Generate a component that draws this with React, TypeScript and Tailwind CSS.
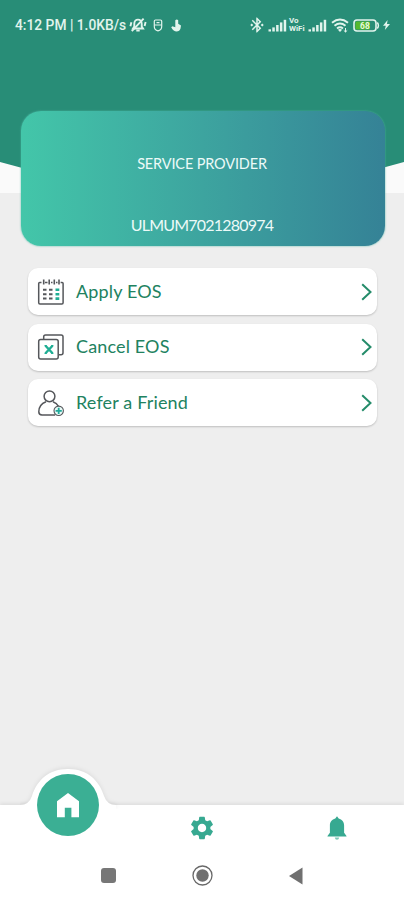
import type { ReactNode } from "react";
import { MdBluetoothConnected, MdSettings } from "react-icons/md";

function SignalIcon() {
    return (
        <svg width="19" height="13" viewBox="0 0 19 13" fill="currentColor">
            <rect x="0.5" y="10.3" width="2.5" height="2.2" />
            <rect x="4.3" y="8.4" width="2.5" height="4.1" />
            <rect x="8.1" y="6" width="2.5" height="6.5" />
            <rect x="11.9" y="3.4" width="2.5" height="9.1" />
            <rect x="15.7" y="0.8" width="2.5" height="11.7" />
        </svg>
    );
}

function MutedBellIcon() {
    return (
        <svg width="18" height="16" viewBox="0 0 18 16" fill="none" stroke="currentColor" strokeWidth="1.9">
            <path d="M4 11.5h10l-1.3-2V6.8C12.7 4.3 11 2.6 9 2.6S5.3 4.3 5.3 6.8v2.7z" />
            <path d="M7.3 13.5h3.4M2.8 14.2 14.6 1.6M1.4 9.2l1-4M16.6 5l-1 4" />
        </svg>
    );
}

function ShieldIcon() {
    return (
        <svg width="10" height="13" viewBox="0 0 10 13" fill="none" stroke="currentColor" strokeWidth="1.2">
            <path d="M2.5 1h5q1.2 0 1.2 1.2v5.4c0 2.4-1.4 3.9-3.7 4.3-2.3-.4-3.7-1.9-3.7-4.3V2.2Q1.3 1 2.5 1z" />
            <path d="M1.5 6h7M3.5 3.7h3" />
        </svg>
    );
}

function TouchIcon() {
    return (
        <svg width="11" height="13" viewBox="0 0 11 13" fill="currentColor">
            <path d="M4.3 1.3Q5.8-.2 7.2 1.3v3.5l2.8 1.6-.5 3.2Q8.7 12.6 5.5 12.6 2.6 12.5.2 8.2l1.2-.9 2.9.9z" />
        </svg>
    );
}

function WifiIcon() {
    return (
        <svg width="18" height="15" viewBox="0 0 18 15" fill="none" stroke="currentColor" strokeWidth="2">
            <path d="M1 4.7Q9-1.7 17 4.7M3.5 7.7q5.5-4.4 11 0M6 10.5q3-2.4 6 0" />
            <path d="m9 14-2.1-2.3q2.1-1.5 4.2 0z" fill="currentColor" stroke="none" />
            <path d="M14.5 10v4m-1.7-1.6L14.5 14l1.7-1.6" strokeWidth="1" />
        </svg>
    );
}

function Battery() {
    return (
        <svg width="27" height="13" viewBox="0 0 27 13">
            <rect x="1" y="1" width="22" height="11" rx="3" fill="none" stroke="#e2f4ed" strokeWidth="1.6" />
            <rect x="2.5" y="2.5" width="14.5" height="8" rx="1.3" fill="#55b82d" />
            <path d="M24.3 3.5q2.2 3 0 6" fill="none" stroke="#e2f4ed" strokeWidth="1.5" />
            <text x="12" y="9.6" textAnchor="middle" fontFamily="Roboto, sans-serif" fontSize="8.5" fontWeight="700" fill="#e5f6df">
                68
            </text>
        </svg>
    );
}

function StatusBar() {
    return (
        <div className="relative flex h-[50px] items-center justify-between pr-[14px] pl-[15px] text-[#e2f4ed]">
            <div className="flex items-center">
                <span className="w-[112px] font-[Roboto,sans-serif] text-[13.8px] font-medium whitespace-nowrap">
                    4:12 PM | 1.0KB/s
                </span>
                <div className="ml-[2px] flex items-center">
                    <MutedBellIcon />
                    <span className="ml-[6px]"><ShieldIcon /></span>
                    <span className="ml-[8px]"><TouchIcon /></span>
                </div>
            </div>
            <div className="flex items-center">
                <MdBluetoothConnected size={18} />
                <span className="ml-[2px]"><SignalIcon /></span>
                <span className="ml-[2px] flex w-[18px] flex-col font-[Roboto,sans-serif] text-[8px] font-bold">
                    <span className="h-[8px] leading-[8px]">Vo</span>
                    <span className="h-[8px] leading-[8px]">WiFi</span>
                </span>
                <span className="ml-[1px]"><SignalIcon /></span>
                <span className="ml-[4px]"><WifiIcon /></span>
                <span className="ml-[4px]"><Battery /></span>
                <svg className="ml-[3px]" width="7" height="10" viewBox="0 0 7 10" fill="currentColor">
                    <path d="M4.6 0 0 5.7h2.8L1.8 10 7 4.1H4z" />
                </svg>
            </div>
        </div>
    );
}

function CalendarIcon() {
    return (
        <svg width="28" height="28" viewBox="0 0 28 28" fill="none" stroke="#55575b" strokeWidth="1.5">
            <path d="M4.5 4.5H2.7Q1.7 4.5 1.7 5.5v19.2q0 1.2 1.2 1.2h22q1.2 0 1.2-1.2V5.5q0-1-1-1h-1.5M8 4.5h2.5M14 4.5h1.5M19 4.5h1.5" />
            <path d="M6.7 1.5v5M12.2 1.5v5M17.3 1.5v5M22 1.5v5" strokeWidth="1.6" />
            <path d="M6 11.8h3.5M12 11.8h3.5M6 16.2h3.5M12 16.2h3.5M6 20.6h3.5M12 20.6h3.5" strokeWidth="2" />
            <path d="M18.5 11.8h3.8M18.5 16.2h3.8M18.5 20.6h3.8" stroke="#20ae94" strokeWidth="2.6" />
        </svg>
    );
}

function CancelIcon() {
    return (
        <svg width="28" height="28" viewBox="0 0 28 28" fill="none" stroke="#55575b" strokeWidth="1.5">
            <rect x="1.7" y="6.5" width="19.5" height="19.5" rx="2" />
            <path d="M6.7 6.2V3.8Q6.7 2 8.5 2h15.7q1.8 0 1.8 1.8v16q0 2-2 2h-2.4" />
            <path d="m8.5 12.8 7 7.4m0-7.4-7 7.4" stroke="#20ae94" strokeWidth="2.4" />
            <path d="M7.5 12.6h2.2m4.5 0h2.2M7.5 20.4h2.2m4.5 0h2.2" stroke="#20ae94" strokeWidth="1.2" />
        </svg>
    );
}

function ReferIcon() {
    return (
        <svg width="28" height="28" viewBox="0 0 28 28" fill="none" stroke="#55575b" strokeWidth="1.5">
            <circle cx="12.5" cy="7.3" r="5.4" />
            <path d="M9 12.8c-4.6 1.8-7.2 5.6-7.2 10q0 3.2 3.2 3.2h13.2M16 12.8c2.6 1 4.6 2.7 5.7 4.9" />
            <circle cx="21.7" cy="21.8" r="4.7" fill="#e8faf7" strokeWidth="1.1" />
            <path d="M21.7 18.7v6.2m-3.1-3.1h6.2" stroke="#20a99a" strokeWidth="1.8" />
        </svg>
    );
}

function HomeIcon() {
    return (
        <svg width="24" height="26" viewBox="0 0 24 26" fill="currentColor">
            <path d="M12 1 1 9.2V25.3h7.8v-9.5h6.6v9.5H23V9.2z" />
        </svg>
    );
}

function BellIcon() {
    return (
        <svg width="20" height="24" viewBox="0 0 20 24" fill="currentColor">
            <path d="M10 .3 8.3 2.4C4.9 3.2 2.9 5.9 2.9 9.5v7.3L.5 20v.6h19V20l-2.4-3.2V9.5c0-3.6-2-6.3-5.4-7.1z" />
            <path d="M7.8 21.5h4.4q-.3 2.2-2.2 2.2t-2.2-2.2z" opacity="0.65" />
        </svg>
    );
}

type MenuRowProps = {
    icon: ReactNode;
    label: string;
};

function MenuRow({ icon, label }: MenuRowProps) {
    return (
        <button className="flex h-[47px] w-full items-center rounded-[10px] bg-white pr-[5px] pl-[9px] shadow-[0_1px_2px_rgba(0,0,0,0.2)]">
            {icon}
            <span className="ml-[11px] pb-px font-[Lato,sans-serif] text-[18px] tracking-[0.15px] whitespace-nowrap text-[#218260]">
                {label}
            </span>
            <svg className="ml-auto" width="11" height="18" viewBox="0 0 11 18" fill="none" stroke="#258c6a" strokeWidth="2">
                <path d="m1.2 1.2 8.3 7.8-8.3 7.8" />
            </svg>
        </button>
    );
}

function BottomNav() {
    return (
        <nav className="relative h-[95px] bg-white shadow-[0_-2px_3px_rgba(0,0,0,0.06)]">
            <svg className="absolute top-[-42px] left-[20px]" width="100" height="46" viewBox="0 0 100 46">
                <path
                    d="M0 42Q9 42 12 33C17 17 29 6 48 6s31 11 36 27q3 9 12 9v4H0z"
                    fill="white"
                    className="drop-shadow-[0_-1px_2px_rgba(0,0,0,0.08)]"
                />
            </svg>
            <button className="absolute top-[-31px] left-[37px] flex size-[62px] items-center justify-center rounded-full bg-[#3baf94] text-white">
                <HomeIcon />
            </button>
            <div className="grid h-[46px] grid-cols-3 text-[#37a991]">
                <span aria-hidden="true" />
                <button className="flex items-center justify-center">
                    <MdSettings size={28} />
                </button>
                <button className="flex items-center justify-center">
                    <BellIcon />
                </button>
            </div>
            <div className="flex h-[49px] items-center pl-[101px]">
                <div className="size-[15px] rounded-[3px] bg-[#777]" />
                <svg className="ml-[76px]" width="21" height="21" viewBox="0 0 21 21">
                    <circle cx="10.5" cy="10.5" r="9.5" fill="none" stroke="#686868" strokeWidth="1.3" />
                    <circle cx="10.5" cy="10.5" r="6.2" fill="#707070" />
                </svg>
                <svg className="ml-[76px]" width="14" height="18" viewBox="0 0 14 18">
                    <path d="M0 9 13.5.5v17z" fill="#707070" />
                </svg>
            </div>
        </nav>
    );
}

export default function App() {
    return (
        <div className="flex h-[900px] w-[404px] flex-col overflow-hidden bg-[#eeeeee]">
            <header className="relative h-[193px] shrink-0 bg-[#fafafa]">
                <svg className="absolute top-0 left-0" width="404" height="193" viewBox="0 0 404 193">
                    <path d="M0 0h404v162Q202 220 0 162z" fill="#288d77" />
                </svg>
                <StatusBar />
            </header>
            <main className="relative flex-1">
                <section className="-mt-[82px] mr-[19px] ml-[21px] flex h-[135px] flex-col items-center rounded-[20px] bg-linear-to-r from-[#43c6a9] via-[#3da49f] to-[#358296] pt-[43px] font-[Lato,sans-serif] text-[#ecfaf8] shadow-[0_0_2px_#4fb5a3]">
                    <p className="mr-[2px] text-[14.5px] leading-[20px] tracking-[-0.15px] whitespace-nowrap">SERVICE PROVIDER</p>
                    <p className="mt-[40px] mr-[2px] text-[16px] leading-[22px] tracking-[-0.8px] whitespace-nowrap">ULMUM7021280974</p>
                </section>
                <section className="mt-[22px] mr-[27px] ml-[28px] flex flex-col gap-[8.5px]">
                    <MenuRow icon={<CalendarIcon />} label="Apply EOS" />
                    <MenuRow icon={<CancelIcon />} label="Cancel EOS" />
                    <MenuRow icon={<ReferIcon />} label="Refer a Friend" />
                </section>
            </main>
            <BottomNav />
        </div>
    );
}
